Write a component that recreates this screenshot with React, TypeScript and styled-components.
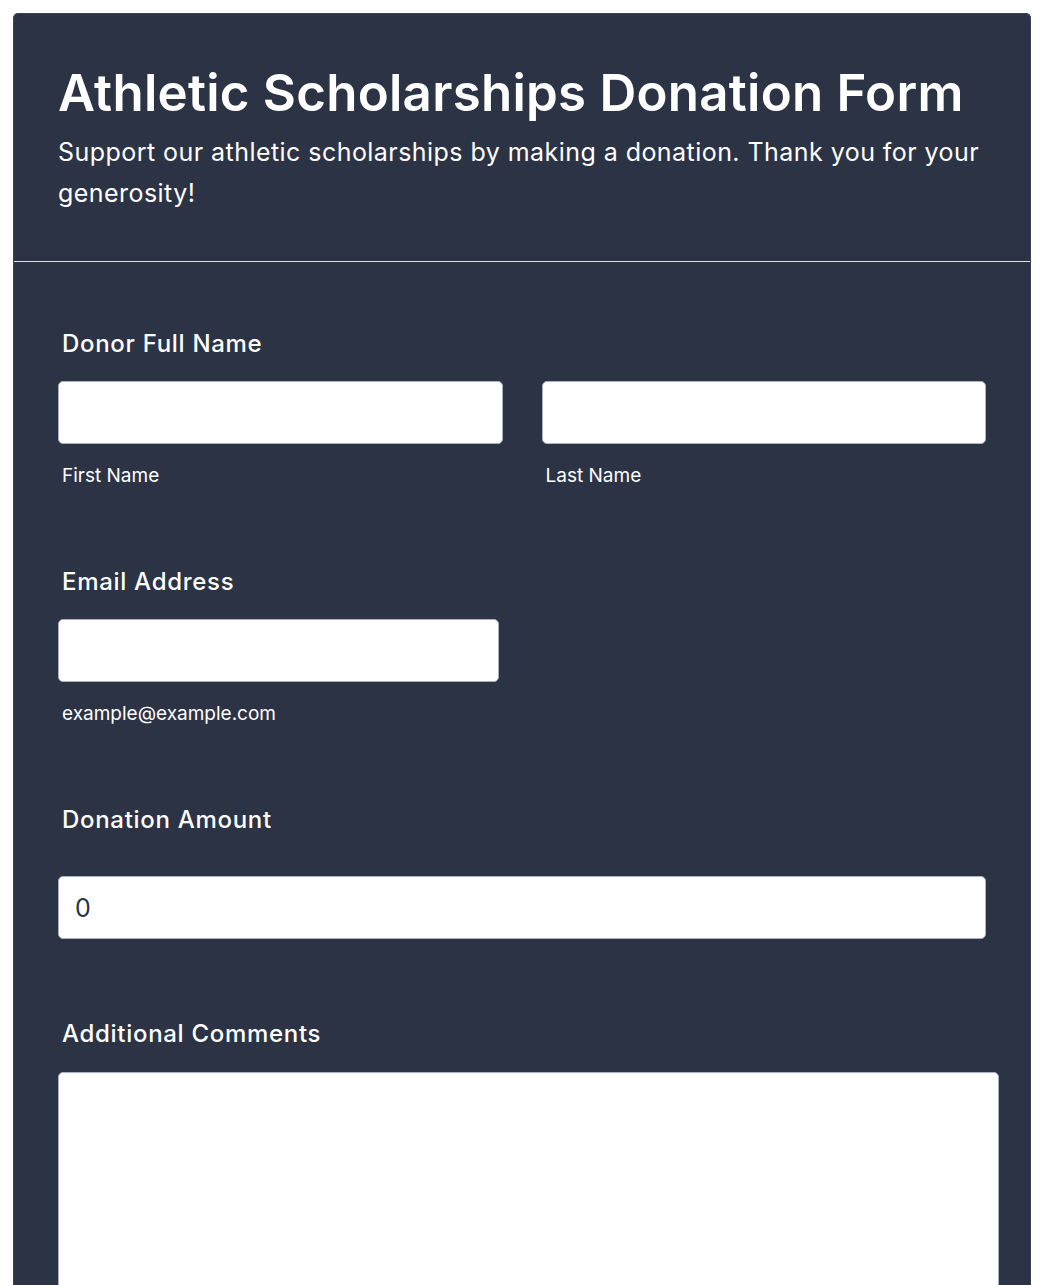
import React from "react";
import styled, { createGlobalStyle } from "styled-components";

const Global = createGlobalStyle`
  html, body { margin: 0; padding: 0; background: #ffffff; }
  body { font-family: Inter, "Noto Sans", sans-serif; }
  * { box-sizing: border-box; }
`;

const Page = styled.div`
  padding: 13px 13px 0;
`;

const Card = styled.div`
  background: #2c3345;
  border-radius: 5px 5px 0 0;
  border: 1px solid #3a4152;
  border-bottom: none;
  min-height: 1272px;
`;

const Header = styled.header`
  padding: 49px 44px 47px 44px;
  border-bottom: 1px solid #dfe2e8;
`;

const Title = styled.h1`
  margin: 0;
  font-size: 51px;
  line-height: 60px;
  font-weight: 600;
  color: #ffffff;
  letter-spacing: 0.25px;
`;

const Subtitle = styled.p`
  margin: 9px 0 0;
  font-size: 25px;
  line-height: 41px;
  font-weight: 400;
  color: #ffffff;
  letter-spacing: 0.45px;
`;

const Body = styled.div`
  padding: 64px 44px 0;
  display: flex;
  flex-direction: column;
  gap: 76px;
`;

const Field = styled.div`
  display: flex;
  flex-direction: column;
`;

const Label = styled.label<{ $gap?: number; $top?: number }>`
  display: block;
  font-size: 24px;
  line-height: 32px;
  font-weight: 500;
  letter-spacing: 0.7px;
  color: #ffffff;
  padding-left: 4px;
  margin-top: ${(p) => p.$top ?? 2}px;
  margin-bottom: ${(p) => p.$gap ?? 21}px;
`;

const Row = styled.div`
  display: grid;
  grid-template-columns: 1fr 1fr;
  column-gap: 39px;
`;

const Col = styled.div`
  display: flex;
  flex-direction: column;
`;

const Input = styled.input<{ $width?: string }>`
  display: block;
  width: ${(p) => p.$width ?? "100%"};
  height: 63px;
  border: 1px solid #aab2c2;
  border-radius: 5px;
  background: #ffffff;
  padding: 0 16px;
  font-family: Inter, "Noto Sans", sans-serif;
  font-size: 25px;
  color: #2c3345;
  outline: none;
`;

const TextArea = styled.textarea`
  display: block;
  width: calc(100% + 13px);
  height: 260px;
  border: 1px solid #aab2c2;
  border-radius: 5px;
  background: #ffffff;
  resize: none;
  outline: none;
  font-family: Inter, "Noto Sans", sans-serif;
  font-size: 23px;
`;

const SubLabel = styled.span`
  display: block;
  margin-top: 20px;
  padding-left: 4px;
  font-size: 19px;
  line-height: 24px;
  font-weight: 400;
  color: #ffffff;
`;

export default function App() {
  return (
    <>
      <Global />
      <Page>
        <Card>
          <Header>
            <Title>Athletic Scholarships Donation Form</Title>
            <Subtitle>
              Support our athletic scholarships by making a donation. Thank you for your generosity!
            </Subtitle>
          </Header>
          <Body>
            <Field>
              <Label>Donor Full Name</Label>
              <Row>
                <Col>
                  <Input type="text" />
                  <SubLabel>First Name</SubLabel>
                </Col>
                <Col>
                  <Input type="text" />
                  <SubLabel>Last Name</SubLabel>
                </Col>
              </Row>
            </Field>
            <Field>
              <Label>Email Address</Label>
              <Input type="email" $width="441px" />
              <SubLabel>example@example.com</SubLabel>
            </Field>
            <Field>
              <Label $gap={40}>Donation Amount</Label>
              <Input type="text" defaultValue="0" />
            </Field>
            <Field>
              <Label $top={3} $gap={22}>Additional Comments</Label>
              <TextArea />
            </Field>
          </Body>
        </Card>
      </Page>
    </>
  );
}
